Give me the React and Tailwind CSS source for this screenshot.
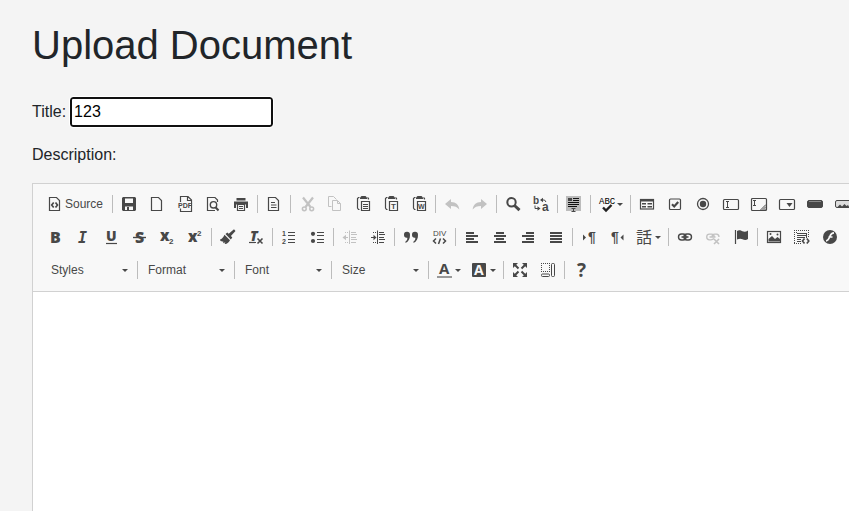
import React from "react";

const SANS = "Liberation Sans, Arial, sans-serif";
const OPEN = "Open Sans, sans-serif";

function Glyph({ x, y, size, children, family = SANS, weight = 700, italic = false, color = "currentColor" }) {
  return (
    <text
      x={x}
      y={y}
      fontSize={size}
      fontFamily={family}
      fontWeight={weight}
      fontStyle={italic ? "italic" : "normal"}
      fill={color}
      stroke="none"
    >
      {children}
    </text>
  );
}

const F = { fill: "currentColor", stroke: "none" };
const page = <path strokeWidth="1.2" d="M2.5 1.5h7l3 3v10h-10z" />;
const clipboard = (
  <>
    <path strokeWidth="1.2" d="M4.500 1.500h-1l-1 1v9.500l1 1.500h1M12.500 1.500l1 1v1" />
    <path {...F} d="M5 3V1.500L6.500 0h4L12 1.500V3z" />
    <path strokeWidth="1.2" d="M6.500 5.500h8v9h-8z" />
  </>
);
const chain = (
  <>
    <rect x="1.500" y="5" width="7.500" height="6" rx="3" strokeWidth="1.400" />
    <rect x="7" y="5" width="7.500" height="6" rx="3" strokeWidth="1.400" />
    <path strokeWidth="1.600" d="M4.500 8h7" />
  </>
);
const undoArrow = <path {...F} d="M1 8l6-5v3c5 0 8 3 8.300 7.500-2-2.500-4.300-3.500-8.300-3.500v3z" />;

const icons = {
  source: (
    <>
      {page}
      <path strokeWidth="1.700" d="M6.700 6.500L4.700 9l2 2.500M8.500 6.500l2 2.500-2 2.500" />
    </>
  ),
  save: (
    <>
      <path {...F} fillRule="evenodd" d="M2 1h12l1 1v12l-1 1H2l-1-1V2zM4 2.500V7h8V2.500zM4 10.500V14h8v-3.500z" />
      <path {...F} d="M6 11h2v3H6z" />
    </>
  ),
  newPage: page,
  pdf: (
    <>
      <path strokeWidth="1.2" d="M3.500 6V.5H11l3.500 3.500v2M3.500 12.500v3h11V6M10.500.5v4h4" />
      <path fill="#f8f8f8" stroke="none" d="M1 6h13v6H1z" />
      <Glyph x="1" y="11.500" size="7">PDF</Glyph>
    </>
  ),
  preview: (
    <>
      <path strokeWidth="1.2" d="M12.500 6V4L10 1.500H2.500v13H10" />
      <circle cx="8.500" cy="8.800" r="3.200" strokeWidth="1.400" />
      <path strokeWidth="2" d="M10.500 11.300l3 3.200" />
    </>
  ),
  print: (
    <>
      <path {...F} d="M3.500 2h9v2.500h-9zM1 5.500h14V12h-2V8.500H3V12H1z" />
      <path strokeWidth="1.2" d="M4.500 8.500h7v6h-7zM6 10.500h4M6 12.500h4" />
    </>
  ),
  templates: (
    <>
      {page}
      <path strokeWidth="1.2" d="M5 6.500h4M5 9h5.500M5 11.500h5.500" />
    </>
  ),
  cut: (
    <>
      <path strokeWidth="2.200" d="M4 1.500L11.500 11M14 1.500L6.500 11" />
      <circle cx="5.300" cy="12.800" r="1.900" strokeWidth="1.500" />
      <circle cx="12.700" cy="12.800" r="1.900" strokeWidth="1.500" />
    </>
  ),
  copy: (
    <>
      <path d="M4.500 10.500h-3V.5h5l3 3" />
      <path d="M5.500 4.500h5l3 3v7h-8zM10.500 4.500v3h3" />
    </>
  ),
  paste: (
    <>
      {clipboard}
      <path d="M8 8.500h5M8 10.500h5M8 12.500h5" />
    </>
  ),
  pasteText: (
    <>
      {clipboard}
      <Glyph x="8" y="13" size="8">T</Glyph>
    </>
  ),
  pasteWord: (
    <>
      {clipboard}
      <Glyph x="7" y="13" size="7">W</Glyph>
    </>
  ),
  undo: undoArrow,
  redo: <g transform="translate(16 0) scale(-1 1)">{undoArrow}</g>,
  find: (
    <>
      <circle cx="6.500" cy="6.300" r="4.200" strokeWidth="2" />
      <path strokeWidth="3" d="M9.500 9.500l5 4.700" />
    </>
  ),
  replace: (
    <>
      <Glyph x="0" y="8" size="10">b</Glyph>
      <Glyph x="9" y="15" size="12">a</Glyph>
      <path d="M8 4h3.500l1.500 2M2 9.500v3h4" />
      <path {...F} d="M7 4l3-2.300v4.600zM7.500 12.500l-3-2.300v4.600z" />
    </>
  ),
  selectAll: (
    <>
      <path fill="#bcbcbc" stroke="none" d="M0 0h15v15H0z" />
      <path {...F} d="M2 2h4v3H2z" />
      <path stroke="#111" d="M7 2.500h6M7 4.500h6M2 6.500h11M2 8.500h11M2 10.500h9" />
      <path d="M5.500 12.500h4M7.500 12.500v3M5.500 15.500h4" />
    </>
  ),
  spell: (
    <>
      <path stroke="#222" strokeWidth="2.400" d="M4 11.500l3 3 5.500-5.500" />
      <Glyph x="0" y="8" size="9" weight="400" family="Liberation Mono, monospace" color="#000">ABC</Glyph>
    </>
  ),
  form: (
    <>
      <rect x="1.500" y="3.500" width="13" height="9.500" strokeWidth="1.2" />
      <path {...F} d="M1 3h14v2.500H1zM3 7h4v1.500H3zM3 10h4v1.500H3z" />
      <path d="M8.500 7.700h4.500M8.500 10.700h4.500" strokeWidth="1.500" />
    </>
  ),
  checkbox: (
    <>
      <rect x="2.500" y="3" width="11" height="10.500" rx="1" strokeWidth="1.200" />
      <path strokeWidth="2.200" d="M5 8.300l2.200 2.200 4-4.500" />
    </>
  ),
  radio: (
    <>
      <circle cx="8" cy="8" r="5.500" strokeWidth="1.300" />
      <circle {...F} cx="8" cy="8" r="3.200" />
    </>
  ),
  textField: (
    <>
      <rect x=".5" y="3.500" width="15" height="10" rx="1" strokeWidth="1.2" />
      <path d="M3 5.500h3M4.500 5.500v6M3 11.500h3" />
    </>
  ),
  textArea: (
    <>
      <rect x=".5" y="2.500" width="15" height="12" rx="1" strokeWidth="1.2" />
      <path d="M2 4.500h3M3.500 4.500v5M2 9.500h3M9.500 14l5.500-5.500M11.500 14l3.500-3.500M13.500 14l1.500-1.500" />
    </>
  ),
  select: (
    <>
      <rect x=".5" y="3.500" width="15" height="10" rx="1" strokeWidth="1.2" />
      <path {...F} d="M7.500 7h6l-3 4z" />
    </>
  ),
  button: (
    <>
      <rect x=".5" y="4.500" width="15" height="7" rx="1.500" fill="currentColor" />
      <path stroke="#8a8a8a" d="M2 5.500h12" />
    </>
  ),
  imageButton: (
    <>
      <rect x=".5" y="4.500" width="15" height="7" rx="1.500" fill="#ddd" />
      <path {...F} d="M2 11.500l3-3 2 2 2.500-2.500 2 2 1.500-1 1.500 2.500z" />
    </>
  ),
  bold: <Glyph x="3" y="14" size="16" weight="800" family={OPEN}>B</Glyph>,
  italic: <Glyph x="3" y="14" size="15" family="DejaVu Sans Mono, monospace" italic>I</Glyph>,
  underline: (
    <>
      <Glyph x="3" y="12" size="14" weight="800" family={OPEN}>U</Glyph>
      <path strokeWidth="1.200" d="M3 14.500h11" />
    </>
  ),
  strike: (
    <>
      <Glyph x="4" y="14" size="16" weight="800" family={OPEN}>S</Glyph>
      <path d="M2 8.500h13" strokeWidth="1.400" />
    </>
  ),
  sub: (
    <>
      <Glyph x="1" y="12" size="15" weight="800" family={OPEN}>x</Glyph>
      <Glyph x="10" y="15" size="8">2</Glyph>
    </>
  ),
  sup: (
    <>
      <Glyph x="1" y="13" size="15" weight="800" family={OPEN}>x</Glyph>
      <Glyph x="10" y="7" size="8">2</Glyph>
    </>
  ),
  brush: (
    <path {...F} d="M14 .3l1.500 1.600L10.900 7l1.400 1.500-1.500 1.900-5.300-5.400L7.300 3.500l1.400 1.200zM4.500 5.800l5.500 5.500c-2 3-3.500 4-5.500 3.500l1-1.500-2.500 1 .5-1.500L.5 12 0 10.500c2-.3 3-1.700 4.500-4.700z" />
  ),
  removeFormat: (
    <>
      <Glyph x="2" y="12" size="14" weight="800" family={OPEN} italic>T</Glyph>
      <path strokeWidth="1.200" d="M1 13.500h7" />
      <path strokeWidth="1.600" d="M9.500 9.500l5 5M14.500 9.500l-5 5" />
    </>
  ),
  numbered: (
    <>
      <Glyph x="1" y="7" size="7">1</Glyph>
      <Glyph x="1" y="15" size="7">2</Glyph>
      <path strokeWidth="1.200" d="M7 3.500h7M7 6.500h7M7 10.500h7M7 13.500h7" />
    </>
  ),
  bulleted: (
    <>
      <circle {...F} cx="4" cy="4.800" r="2.100" />
      <circle {...F} cx="4" cy="12" r="2.100" />
      <path strokeWidth="1.200" d="M8 3.500h7M8 6.500h7M8 10.500h7M8 13.500h7" />
    </>
  ),
  outdent: (
    <>
      <path d="M7.500 1.500V15M9 3.500h5M9 5.500h6M9 8.500h5M9 10.500h6M9 13.500h5M2 8.500h4" />
      <path strokeDasharray="1 1" d="M3 3.500h4M3 13.500h4" />
      <path {...F} d="M.5 8.500L4 5.800v5.400z" />
    </>
  ),
  indent: (
    <>
      <path d="M7.500 1.500V15M9 3.500h5M9 5.500h6M9 8.500h5M9 10.500h6M9 13.500h5M1 8.500h4" />
      <path strokeDasharray="1 1" d="M3 3.500h4M3 13.500h4" />
      <path {...F} d="M6.500 8.500L3.500 5.800v5.400z" />
    </>
  ),
  quote: (
    <>
      <path {...F} d="M1 6a3 3 0 0 1 6-.3c.2 3.800-1.500 7-4.500 8.300v-1.500C4 11.500 4.500 10 4.300 8.700 2.500 9.200 1 8 1 6z" />
      <path {...F} d="M9 6a3 3 0 0 1 6-.3c.2 3.800-1.500 7-4.500 8.300v-1.500c1.500-1 2-2.500 1.800-3.800C10.500 9.200 9 8 9 6z" />
    </>
  ),
  div: (
    <>
      <Glyph x="2" y="7" size="8" weight="400">DIV</Glyph>
      <path strokeWidth="1.500" d="M5 9.500l-2.500 2.500L5 14.500M12 9.500l2.500 2.500-2.500 2.500M9.500 9.500l-2 5.500" />
    </>
  ),
  left: <path {...F} d="M2 3h8v2H2zM2 6h12v2H2zM2 9h8v2H2zM2 12h12v2H2z" />,
  center: <path {...F} d="M4 3h8v2H4zM2 6h12v2H2zM4 9h8v2H4zM2 12h12v2H2z" />,
  right: <path {...F} d="M6 3h8v2H6zM2 6h12v2H2zM6 9h8v2H6zM2 12h12v2H2z" />,
  justify: <path {...F} d="M2 3h12v2H2zM2 6h12v2H2zM2 9h12v2H2zM2 12h12v2H2z" />,
  ltr: (
    <>
      <path {...F} d="M2 5.500l3 3-3 3z" />
      <Glyph x="7" y="13" size="14">¶</Glyph>
    </>
  ),
  rtl: (
    <>
      <path {...F} d="M14.500 5.500l-3 3 3 3z" />
      <Glyph x="2" y="13" size="14">¶</Glyph>
    </>
  ),
  language: <Glyph x="-1" y="14" size="16" weight="400" family="Noto Sans CJK JP, sans-serif">話</Glyph>,
  link: chain,
  unlink: (
    <>
      <path strokeWidth="1.300" d="M9 9.500c-1 1-2 1.300-3 1.300H4.500a2.800 2.800 0 0 1 0-5.600h2a2.800 2.800 0 0 1 2.800 2.800M7 8a2.800 2.800 0 0 1 2.800-2.800h1.700A2.800 2.800 0 0 1 14 8M4.500 8h6" />
      <path strokeWidth="1.600" d="M9 10l5 5M14 10l-5 5" />
    </>
  ),
  anchor: (
    <>
      <path strokeWidth="1.200" d="M2.500 1v14" />
      <path {...F} d="M4 2c2-1.500 4-.5 5.500.3S13 3 15 1.500V10c-2 1.500-4 1-5.500.2S6 9.500 4 10.500z" />
    </>
  ),
  image: (
    <>
      <rect x="1.500" y="2.500" width="13" height="11" strokeWidth="1.200" />
      <path {...F} d="M2.500 12v-2L6 7l3 3 2.500-2L14 10v2.500H2.500z" />
      <circle {...F} cx="11.500" cy="5.500" r="1" />
      <circle {...F} cx="4.500" cy="5" r="1" />
    </>
  ),
  embed: (
    <>
      <path strokeDasharray="1 1" d="M0 1.500h15M0 3.500h3M0 14.500h8M.5 1v13M14.500 1v8" />
      <path d="M3 4.500h10M3 6.500h10M3 8.500h8M3 10.500h4M3 12.500h4M12.500 4v5" />
      <path strokeWidth="1.600" d="M10.500 9.500L8.500 12l2 2.500M12.800 9.500l2 2.500-2 2.500" />
    </>
  ),
  flash: (
    <>
      <circle {...F} cx="8" cy="8" r="7" />
      <path stroke="#f8f8f8" strokeWidth="1.700" d="M12 3.800c-3 0-3.500 2-4.300 4S6 11.800 4 12M6.500 8h4" />
    </>
  ),
  textColor: (
    <>
      <Glyph x="2" y="12" size="15" family={OPEN}>A</Glyph>
      <path stroke="#999" strokeWidth="2" d="M0 15h15" />
    </>
  ),
  bgColor: (
    <>
      <rect {...F} x="0" y="1" width="14" height="14" rx="1" />
      <Glyph x="2" y="13" size="14" family={OPEN} color="#f8f8f8">A</Glyph>
    </>
  ),
  maximize: (
    <>
      <path {...F} d="M1 1h5L4.500 2.500 1 6zM15 1v5l-5-5zM1 15v-5l5 5zM15 15h-5l5-5z" />
      <path strokeWidth="2" d="M2 2l4.500 4.500M14 2L9.500 6.500M2 14l4.500-4.500M14 14L9.500 9.500" />
    </>
  ),
  blocks: (
    <>
      <path strokeDasharray="1 1" d="M1 1.500h9M1 9.500h9M1.500 1v9M9.500 1v9" />
      <rect x="1.500" y="12" width="8" height="2.500" rx="1" />
      <rect x="11.500" y="1.500" width="3" height="13" rx="1" />
    </>
  ),
  about: <Glyph x="4" y="15" size="19" family={OPEN}>?</Glyph>,
};

function Icon({ name }) {
  return (
    <svg viewBox="0 0 16 16" className="h-4 w-4 shrink-0 overflow-visible" fill="none" stroke="currentColor" aria-hidden="true">
      {icons[name]}
    </svg>
  );
}

function Caret() {
  return (
    <svg viewBox="0 0 6 3" className="h-[3px] w-1.5 shrink-0" fill="currentColor" aria-hidden="true">
      <path d="M0 0h6L3 3z" />
    </svg>
  );
}

function ToolButton({ name, label, disabled }) {
  return (
    <button
      type="button"
      aria-label={label}
      title={label}
      disabled={disabled}
      className="flex h-8 w-7 shrink-0 items-center justify-center disabled:opacity-30"
    >
      <Icon name={name} />
    </button>
  );
}

function MenuButton({ name, label }) {
  return (
    <button type="button" aria-label={label} title={label} className="flex h-8 w-[35px] shrink-0 items-center gap-0.5 pl-1.5">
      <Icon name={name} />
      <Caret />
    </button>
  );
}

function Combo({ label }) {
  return (
    <div className="grid w-[92px] shrink-0 items-center">
      <select aria-label={label} className="col-start-1 row-start-1 h-8 w-full appearance-none bg-transparent pl-2 text-xs outline-none">
        <option>{label}</option>
      </select>
      <span className="pointer-events-none col-start-1 row-start-1 mr-[7px] justify-self-end">
        <Caret />
      </span>
    </div>
  );
}

const rowOne = [
  [["save", "Save"], ["newPage", "New Page"], ["pdf", "Export to PDF"], ["preview", "Preview"], ["print", "Print"]],
  [["templates", "Templates"]],
  [["cut", "Cut", 1], ["copy", "Copy", 1], ["paste", "Paste"], ["pasteText", "Paste as plain text"], ["pasteWord", "Paste from Word"]],
  [["undo", "Undo", 1], ["redo", "Redo", 1]],
  [["find", "Find"], ["replace", "Replace"]],
  [["selectAll", "Select All"]],
  [["spell", "Spell Check", 0, 1]],
  [
    ["form", "Form"], ["checkbox", "Checkbox"], ["radio", "Radio Button"], ["textField", "Text Field"],
    ["textArea", "Textarea"], ["select", "Selection Field"], ["button", "Button"], ["imageButton", "Image Button"],
  ],
];

const rowTwo = [
  [["bold", "Bold"], ["italic", "Italic"], ["underline", "Underline"], ["strike", "Strikethrough"], ["sub", "Subscript"], ["sup", "Superscript"]],
  [["brush", "Copy Formatting"], ["removeFormat", "Remove Format"]],
  [["numbered", "Numbered List"], ["bulleted", "Bulleted List"]],
  [["outdent", "Decrease Indent", 1], ["indent", "Increase Indent"]],
  [["quote", "Block Quote"], ["div", "Create Div Container"]],
  [["left", "Align Left"], ["center", "Center"], ["right", "Align Right"], ["justify", "Justify"]],
  [["ltr", "Left to Right"], ["rtl", "Right to Left"], ["language", "Set Language", 0, 1]],
  [["link", "Link"], ["unlink", "Unlink", 1], ["anchor", "Anchor"]],
  [["image", "Image"], ["embed", "Embed"], ["flash", "Flash"]],
];

const rowThree = [
  [["textColor", "Text Color", 0, 1], ["bgColor", "Background Color", 0, 1]],
  [["maximize", "Maximize"], ["blocks", "Show Blocks"]],
  [["about", "About"]],
];

function Separator() {
  return <span className="mx-0.5 h-[18px] w-px shrink-0 bg-[#bcbcbc]" />;
}

function Groups({ groups }) {
  return groups.map((group, i) => (
    <React.Fragment key={i}>
      {i > 0 && <Separator />}
      {group.map(([name, label, disabled, menu]) =>
        menu ? (
          <MenuButton key={name} name={name} label={label} />
        ) : (
          <ToolButton key={name} name={name} label={label} disabled={Boolean(disabled)} />
        )
      )}
    </React.Fragment>
  ));
}

export default function App() {
  return (
    <main className="flex h-screen flex-col overflow-hidden bg-[#f4f4f4] pl-8 pt-[21px] font-['Liberation_Sans',Arial,sans-serif] text-[#212529]">
      <h1 className="text-[40px] leading-[48px]">Upload Document</h1>
      <div className="mt-7 flex items-center gap-1">
        <label htmlFor="title">Title:</label>
        <input
          id="title"
          type="text"
          defaultValue="123"
          className="h-[30px] w-[203px] rounded-[3px] border-2 border-[#101010] bg-white px-0.5 text-black outline outline-white"
        />
      </div>
      <label htmlFor="description" className="mt-4 block">Description:</label>
      <section className="mt-4 flex min-h-0 flex-1 flex-col border-l border-t border-[#d1d1d1]">
        <div role="toolbar" aria-label="Editor toolbar" className="overflow-hidden border-b border-[#d1d1d1] bg-[#f8f8f8] py-1 pl-2 text-[#484848]">
          <div className="flex h-[33px] items-start">
            <div className="flex h-8 items-center">
              <button type="button" className="flex h-8 w-[69px] shrink-0 items-center gap-0.5 pl-1.5 text-xs">
                <Icon name="source" />
                Source
              </button>
              <Separator />
              <Groups groups={rowOne} />
            </div>
          </div>
          <div className="flex h-[33px] items-start">
            <div className="flex h-8 items-center">
              <Groups groups={rowTwo} />
            </div>
          </div>
          <div className="flex h-[33px] items-start pl-0.5">
            <div className="flex h-8 items-center">
              {["Styles", "Format", "Font", "Size"].map((label) => (
                <React.Fragment key={label}>
                  <Combo label={label} />
                  <Separator />
                </React.Fragment>
              ))}
              <Groups groups={rowThree} />
            </div>
          </div>
        </div>
        <textarea id="description" className="min-h-0 w-full flex-1 resize-none bg-white p-5 outline-none" />
      </section>
    </main>
  );
}
